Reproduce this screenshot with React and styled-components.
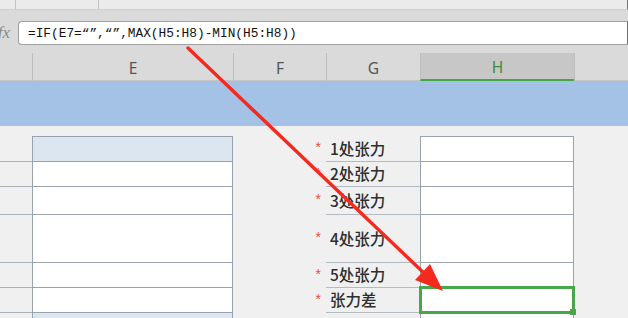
import React from "react";
import styled, { createGlobalStyle } from "styled-components";

const Global = createGlobalStyle`
  html, body { margin: 0; padding: 0; background: #f0f0f0; overflow: hidden; }
  #root { width: 628px; height: 318px; overflow: hidden; }
`;

const Page = styled.div`
  position: relative;
  width: 628px;
  height: 318px;
  overflow: hidden;
  background: #f0f0f0;
  font-family: "Noto Sans", "Noto Sans CJK SC", sans-serif;
`;

const TopStrip = styled.div`
  display: flex;
  height: 9px;
  background: #ebebeb;
  border-bottom: 1px solid #cfcfcf;
  border-right: 1px solid #777;
  overflow: hidden;
`;

const TabCell = styled.div`
  display: flex;
  align-items: flex-end;
  width: ${(p) => (p.$w ? `${p.$w}px` : "auto")};
  flex: ${(p) => (p.$w ? "none" : "1")};
  border-right: ${(p) => (p.$w ? "1px solid #c4c4c4" : "none")};
  padding-left: 8px;
  box-sizing: border-box;
`;

const TabText = styled.span`
  font-family: "Liberation Mono", monospace;
  font-size: 12px;
  line-height: 14px;
  margin-bottom: 5px;
  color: #444;
  white-space: nowrap;
`;

const FormulaBar = styled.div`
  display: flex;
  align-items: flex-start;
  height: 35px;
  padding-top: 11px;
  box-sizing: border-box;
  background: #dadada;
`;

const FxLabel = styled.div`
  width: 18px;
  height: 24px;
  flex: none;
  display: flex;
  justify-content: flex-end;
  align-items: center;
  padding-right: 8px;
  box-sizing: border-box;
  overflow: hidden;
  font-family: "Liberation Serif", serif;
  font-style: italic;
  font-size: 17px;
  color: #8a8a8a;
`;

const FormulaInput = styled.div`
  flex: 1;
  height: 24px;
  box-sizing: border-box;
  background: #fff;
  border: 1px solid #9f9f9f;
  border-right: 1px solid #6e6e6e;
  border-radius: 4px 0 0 4px;
  padding-left: 9px;
  display: flex;
  align-items: center;
  font-family: "Liberation Mono", monospace;
  font-size: 12.8px;
  color: #111;
  white-space: pre;
`;

const HeaderArea = styled.div`
  background: #dadada;
  padding-top: 8px;
`;

const COLS = "32px 201px 93px 94px 154px 1fr";

const HeaderGrid = styled.div`
  display: grid;
  grid-template-columns: ${COLS};
  height: 28px;
`;

const ColHead = styled.div`
  display: flex;
  align-items: center;
  justify-content: center;
  box-sizing: border-box;
  border-left: ${(p) => (p.$first ? "none" : "1px solid #bdbdbd")};
  border-bottom: ${(p) => (p.$active ? "2px solid #45a845" : "1px solid #c4c4c4")};
  background: ${(p) => (p.$active ? "#c7c7c7" : "#dadada")};
  color: ${(p) => (p.$active ? "#3a8c3a" : "#555")};
  font-size: 15.5px;
  padding-top: 2px;
`;

const Band = styled.div`
  height: 45px;
  background: #a3c2e5;
`;

const Gap = styled.div`
  height: 10px;
`;

const SheetGrid = styled.div`
  display: grid;
  grid-template-columns: ${COLS};
  grid-template-rows: ${(p) => p.$rows};
`;

const DCell = styled.div`
  border-bottom: 1px solid #a9b1b9;
`;

const ECell = styled.div`
  box-sizing: border-box;
  background: ${(p) => (p.$head ? "#dce6f0" : "#fff")};
  border-left: 1px solid #98a3ae;
  border-right: 1px solid #98a3ae;
  border-bottom: 1px solid #98a3ae;
  border-top: ${(p) => (p.$first ? "1px solid #98a3ae" : "none")};
`;

const FCell = styled.div`
  display: flex;
  align-items: center;
  justify-content: flex-end;
  padding-right: 5px;
`;

const Star = styled.span`
  color: #ec4b3f;
  font-family: "Liberation Sans", sans-serif;
  font-size: 14px;
  line-height: 1;
  margin-top: -4px;
`;

const GCell = styled.div`
  display: flex;
  align-items: center;
  padding-left: 4px;
  padding-bottom: 2px;
  border-bottom: 1px solid #b3bac2;
  font-family: "Noto Sans CJK SC", sans-serif;
  font-size: 15.5px;
  font-weight: 500;
  color: #2e2e2e;
  white-space: nowrap;
`;

const HCell = styled.div`
  position: relative;
  box-sizing: border-box;
  background: #fff;
  border-left: 1px solid #98a3ae;
  border-right: 1px solid #98a3ae;
  border-bottom: 1px solid #98a3ae;
  border-top: ${(p) => (p.$first ? "1px solid #98a3ae" : "none")};
`;

const Selection = styled.div`
  position: absolute;
  top: -2px;
  left: -2px;
  right: -2px;
  bottom: -2px;
  border: 3px solid #4aa64a;
  z-index: 2;
`;

const FillHandle = styled.div`
  position: absolute;
  right: -4px;
  bottom: -4px;
  width: 6px;
  height: 6px;
  background: #4aa64a;
`;

const ArrowSvg = styled.svg`
  position: absolute;
  left: 0;
  top: 0;
  pointer-events: none;
  z-index: 10;
`;

const rows = [
  { h: 26, label: "1处张力", eHead: true },
  { h: 25, label: "2处张力" },
  { h: 28, label: "3处张力" },
  { h: 48, label: "4处张力" },
  { h: 25, label: "5处张力" },
  { h: 25, label: "张力差", selected: true },
  { h: 30, label: "平均张力", eHead: true },
];

const headers = ["", "E", "F", "G", "H", ""];

export default function App() {
  return (
    <>
      <Global />
      <Page>
        <TopStrip>
          <TabCell $w={16} />
          <TabCell $w={83}>
            <TabText>Arial</TabText>
          </TabCell>
          <TabCell />
        </TopStrip>
        <FormulaBar>
          <FxLabel>fx</FxLabel>
          <FormulaInput>{'=IF(E7=“”,“”,MAX(H5:H8)-MIN(H5:H8))'}</FormulaInput>
        </FormulaBar>
        <HeaderArea>
          <HeaderGrid>
            {headers.map((h, i) => (
              <ColHead key={i} $first={i === 0} $active={h === "H"}>
                {h}
              </ColHead>
            ))}
          </HeaderGrid>
        </HeaderArea>
        <Band />
        <Gap />
        <SheetGrid $rows={rows.map((r) => `${r.h}px`).join(" ")}>
          {rows.map((r, i) => (
            <React.Fragment key={i}>
              <DCell />
              <ECell $head={r.eHead} $first={i === 0} />
              <FCell>
                <Star>*</Star>
              </FCell>
              <GCell>{r.label}</GCell>
              <HCell $first={i === 0}>
                {r.selected && (
                  <Selection>
                    <FillHandle />
                  </Selection>
                )}
              </HCell>
              <div />
            </React.Fragment>
          ))}
        </SheetGrid>
        <ArrowSvg width="628" height="318" viewBox="0 0 628 318">
          <line x1="188" y1="48" x2="426" y2="275" stroke="#f52a1e" strokeWidth="3.4" strokeLinecap="round" />
          <polygon points="443,291 415,280 430,264" fill="#f52a1e" />
        </ArrowSvg>
      </Page>
    </>
  );
}
